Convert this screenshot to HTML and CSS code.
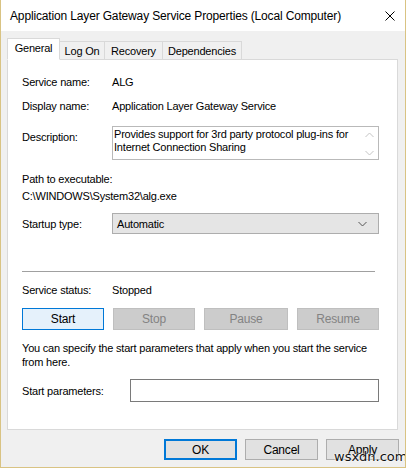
FILE: index.html
```html
<!DOCTYPE html>
<html lang="en">
<head>
  <meta charset="UTF-8" />
  <title>ALG Properties</title>
  <meta name="viewport" content="width=device-width, initial-scale=1.0"/>
  <link rel="stylesheet" href="styles.css">
</head>
<body>

<div class="window">
  <div class="titlebar">
    <span class="title">Application Layer Gateway Service Properties (Local Computer)</span>
    <svg class="close" width="10" height="10" viewBox="0 0 10 10">
      <path d="M0.5 0.5 L9.5 9.5 M9.5 0.5 L0.5 9.5" stroke="#000" stroke-width="1" fill="none"/>
    </svg>
  </div>

  <div class="client">
    <div class="tabs">
      <div class="tab active" style="width:53px">General</div>
      <div class="tab" style="width:46px">Log On</div>
      <div class="tab" style="width:59px">Recovery</div>
      <div class="tab" style="width:80px">Dependencies</div>
    </div>

    <div class="panel">
      <div class="row r-name">
        <span class="lbl">Service name:</span>
        <span>ALG</span>
      </div>
      <div class="row r-display">
        <span class="lbl">Display name:</span>
        <span>Application Layer Gateway Service</span>
      </div>
      <div class="row r-desc">
        <span class="lbl">Description:</span>
        <div class="desc">
          <div class="desc-text">Provides support for 3rd party protocol plug-ins for Internet Connection Sharing</div>
          <div class="scroll">
            <svg width="9" height="6" viewBox="0 0 9 6"><path d="M0.5 5 L4.5 1 L8.5 5" stroke="#c4c4c4" fill="none"/></svg>
            <svg width="9" height="6" viewBox="0 0 9 6"><path d="M0.5 1 L4.5 5 L8.5 1" stroke="#c4c4c4" fill="none"/></svg>
          </div>
        </div>
      </div>
      <div class="path-lbl">Path to executable:</div>
      <div class="path-val">C:\WINDOWS\System32\alg.exe</div>
      <div class="row r-startup">
        <span class="lbl">Startup type:</span>
        <div class="combo">
          <span>Automatic</span>
          <svg width="9" height="6" viewBox="0 0 9 6"><path d="M0.5 1 L4.5 5 L8.5 1" stroke="#555" fill="none"/></svg>
        </div>
      </div>
      <div class="sep"></div>
      <div class="row r-status">
        <span class="lbl">Service status:</span>
        <span>Stopped</span>
      </div>
      <div class="svc-buttons">
        <div class="btn focus" style="width:82px">Start</div>
        <div class="btn off" style="width:82px">Stop</div>
        <div class="btn off" style="width:84px">Pause</div>
        <div class="btn off" style="width:82px">Resume</div>
      </div>
      <p class="hint">You can specify the start parameters that apply when you start the service from here.</p>
      <div class="row r-params">
        <span class="lbl wide">Start parameters:</span>
        <div class="field"></div>
      </div>
    </div>

    <div class="dlg-buttons">
      <div class="btn focus plain">OK</div>
      <div class="btn plain">Cancel</div>
      <div class="btn plain">Apply</div>
    </div>
  </div>

  <span class="mark">wsxdn.com</span>
</div>

</body>
</html>
```

FILE: styles.css
```css
body { margin: 0; font-family: "Liberation Sans", Arial, sans-serif; font-size: 11px; letter-spacing: -0.2px; color: #000; background: #fff; }
.window { position: relative; width: 406px; height: 468px; box-sizing: border-box; border: 1px solid #d9c383; border-top: none; background: #f0f0f0; overflow: hidden; }

.titlebar { height: 31px; background: #fff; display: flex; align-items: center; justify-content: space-between; padding: 0 10px 0 9px; }
.title { font-size: 12px; letter-spacing: -0.15px; }

.client { padding: 0 6px; }
.tabs { display: flex; align-items: flex-end; margin-top: 7px; height: 22px; margin-bottom: -1px; }
.tab { height: 19px; box-sizing: border-box; border: 1px solid #d9d9d9; margin-left: -1px; display: flex; align-items: center; justify-content: center; background: #f0f0f0; }
.tab:first-child { margin-left: 0; }
.tab.active { height: 22px; background: #fff; border-bottom-color: #fff; position: relative; z-index: 1; padding-bottom: 2px; }

.panel { width: 391px; height: 371px; box-sizing: border-box; border: 1px solid #d9d9d9; background: #fff; padding: 0 18px 0 14px; }

.row { display: flex; align-items: center; line-height: 14px; }
.lbl { width: 90px; flex: none; }
.lbl.wide { width: 108px; }
.r-name { margin-top: 15px; }
.r-display { margin-top: 10px; }
.r-desc { margin-top: 13px; align-items: flex-start; }
.r-desc .lbl { padding-top: 4px; }
.desc { flex: 1; height: 34px; box-sizing: border-box; border: 1px solid #b9b9b9; display: flex; }
.desc-text { flex: 1; padding: 0 2px 0 1px; line-height: 13px; margin-top: 1px; }
.scroll { width: 17px; display: flex; flex-direction: column; justify-content: space-between; align-items: center; padding: 5px 0 3px; }

.path-lbl { margin-top: 12px; line-height: 14px; }
.path-val { margin-top: 3px; line-height: 14px; }

.r-startup { margin-top: 10px; }
.combo { flex: 1; height: 21px; box-sizing: border-box; border: 1px solid #adadad; background: #e5e5e5; display: flex; align-items: center; justify-content: space-between; padding: 0 11px 0 4px; }

.sep { margin-top: 37px; margin-right: 4px; border-top: 1px solid #a0a0a0; }
.r-status { margin-top: 11px; }

.svc-buttons { display: flex; justify-content: space-between; margin-top: 11px; }
.btn { height: 22px; box-sizing: border-box; border: 1px solid #adadad; background: #e1e1e1; display: flex; align-items: center; justify-content: center; font-size: 12px; }
.btn.focus { border-color: #0078d7; background: #e5f1fb; }
.btn.off { background: #cccccc; border-color: #bfbfbf; color: #838383; }

.hint { margin: 11px 0 0; line-height: 14px; }
.r-params { margin-top: 10px; }
.field { flex: 1; height: 23px; box-sizing: border-box; border: 1px solid #7a7a7a; background: #fff; }

.dlg-buttons { display: flex; justify-content: flex-end; gap: 8px; margin-top: 9px; }
.dlg-buttons .btn { width: 73px; height: 21px; }
.dlg-buttons .btn.focus { background: #e1e1e1; border-width: 2px; }

.mark { position: absolute; left: 333px; top: 449px; font-family: "DejaVu Sans", sans-serif; font-size: 13px; letter-spacing: 0; color: #111; text-shadow: 0 0 2px #fff, 0 0 2px #fff; }
```
